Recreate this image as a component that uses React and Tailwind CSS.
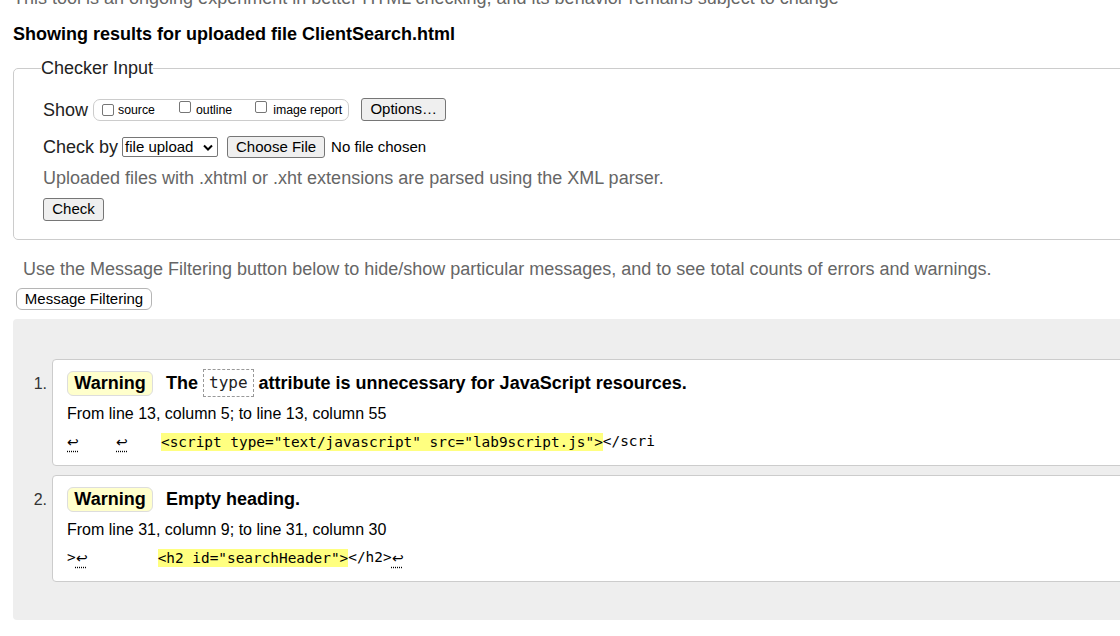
import React from "react";

const Btn = ({ children, className = "" }) => (
  <span
    className={
      "inline-flex items-center justify-center bg-[#efefef] border border-[#767676] rounded-[3px] text-[15px] text-black " +
      className
    }
  >
    {children}
  </span>
);

const Box = () => (
  <span className="inline-block w-[12px] h-[12px] rounded-[2px] border border-[#767676] bg-white" />
);

const Ret = ({ className = "" }) => (
  <span
    className={
      "inline-block w-[12px] text-center font-['DejaVu_Sans',sans-serif] font-extralight text-[14px] leading-[18px] underline decoration-dotted decoration-[#000] underline-offset-[4px] " +
      className
    }
  >
    ↩
  </span>
);

const Card = ({ num, children }) => (
  <div className="flex">
    <div className="w-[39px] pr-[5px] text-right text-[16px] leading-[20px] text-[#333] mt-[15px] shrink-0">{num}.</div>
    <div className="flex-1 bg-white border border-[#ccc] rounded-[4px] pt-[9px] pb-[14px] pl-[14px]">{children}</div>
  </div>
);

const Badge = () => (
  <span className="inline-flex items-center justify-center w-[86px] h-[25px] bg-[#ffffcc] border border-[#ddd] rounded-[6px] font-bold text-[18px] text-black">
    Warning
  </span>
);

export default function App() {
  const mono = "font-['DejaVu_Sans_Mono',monospace] text-[14.4px]";
  return (
    <div className="w-[1120px] h-[636px] overflow-hidden bg-white font-['Liberation_Sans',Arial,sans-serif] text-[#222]">
      <div className="w-[1200px]">
        <p className="-mt-[13px] ml-[13px] text-[18px] leading-[22px] text-[#666] whitespace-nowrap">
          This tool is an ongoing experiment in better HTML checking, and its behavior remains subject to change
        </p>
        <h2 className="mt-[14px] ml-[13px] text-[18px] leading-[22px] font-bold text-black">
          Showing results for uploaded file ClientSearch.html
        </h2>

        <fieldset className="mt-[12px] ml-[13px] border border-[#ccc] rounded-[5px] px-[29px] pt-0 pb-[18px]">
          <legend className="-ml-[2px] px-0 text-[18px] leading-[22px] text-[#222]">Checker Input</legend>

          <div className="mt-[18px] h-[25px] flex items-center">
            <span className="text-[18px] leading-[22px]">Show</span>
            <span className="ml-[5px] h-[22px] flex items-center border border-[#ccc] rounded-[7px] bg-white pl-[8px] pr-[6px] text-[12.3px] text-black">
              <Box />
              <span className="ml-[4px] mt-[1px]">source</span>
              <span className="ml-[24px]"><Box /></span>
              <span className="ml-[5px] mt-[1px]">outline</span>
              <span className="ml-[23px]"><Box /></span>
              <span className="ml-[6px] mt-[1px]">image report</span>
            </span>
            <Btn className="ml-[12px] w-[85px] h-[23px]">Options…</Btn>
          </div>

          <div className="mt-[14px] h-[22px] flex items-center">
            <span className="text-[18px] leading-[22px]">Check by</span>
            <span className="ml-[4px] w-[96px] h-[20px] flex items-center justify-between border border-[#767676] rounded-[2px] bg-white pl-[2px] pr-[4px] text-[15px] text-black">
              file upload
              <svg width="10" height="7" viewBox="0 0 10 7">
                <path d="M1 1.5 L5 5.5 L9 1.5" fill="none" stroke="#000" strokeWidth="2" />
              </svg>
            </span>
            <Btn className="ml-[9px] w-[98px] h-[22px]">Choose File</Btn>
            <span className="ml-[6px] text-[15px] text-black">No file chosen</span>
          </div>

          <p className="mt-[9px] text-[18px] leading-[22px] text-[#666]">
            Uploaded files with .xhtml or .xht extensions are parsed using the XML parser.
          </p>

          <div className="mt-[9px] flex">
            <Btn className="w-[61px] h-[23px]">Check</Btn>
          </div>
        </fieldset>

        <p className="mt-[18px] ml-[23px] text-[18px] leading-[22px] text-[#666]">
          Use the Message Filtering button below to hide/show particular messages, and to see total counts of errors and warnings.
        </p>
        <div className="mt-[8px] ml-[16px] flex">
          <span className="inline-flex items-center justify-center w-[136px] h-[22px] bg-white border border-[#b5b5b5] rounded-[6px] text-[15px] text-black">
            Message Filtering
          </span>
        </div>

        <div className="mt-[9px] ml-[13px] bg-[#eee] rounded-[4px] pt-[40px] pb-[38px] flex flex-col gap-[9px]">
          <Card num="1">
            <div className="h-[28px] flex items-center">
              <Badge />
              <span className="ml-[13px] font-bold text-[18px] text-black">The</span>
              <span className="ml-[5px] h-[28px] px-[5px] flex items-center border border-dashed border-[#999] font-['DejaVu_Sans_Mono',monospace] text-[16px] text-[#222]">
                type
              </span>
              <span className="ml-[5px] font-bold text-[18px] text-black">attribute is unnecessary for JavaScript resources.</span>
            </div>
            <p className="mt-[7px] text-[16px] leading-[20px] text-black">
              From line 13, column 5; to line 13, column 55
            </p>
            <div className={"mt-[9px] h-[18px] flex items-center whitespace-pre text-black " + mono}>
              <Ret />
              <Ret className="ml-[37px]" />
              <span className="ml-[33px] bg-[#ffff80] h-[18px] leading-[18px]">{'<script type="text/javascript" src="lab9script.js">'}</span>
              <span>{"</scri"}</span>
            </div>
          </Card>
          <Card num="2">
            <div className="h-[28px] flex items-center">
              <Badge />
              <span className="ml-[13px] font-bold text-[18px] text-black">Empty heading.</span>
            </div>
            <p className="mt-[7px] text-[16px] leading-[20px] text-black">
              From line 31, column 9; to line 31, column 30
            </p>
            <div className={"mt-[9px] h-[18px] flex items-center whitespace-pre text-black " + mono}>
              <span>{">"}</span>
              <Ret />
              <span className="ml-[70px] bg-[#ffff80] h-[18px] leading-[18px]">{'<h2 id="searchHeader">'}</span>
              <span>{"</h2>"}</span>
              <Ret />
            </div>
          </Card>
        </div>
      </div>
    </div>
  );
}
